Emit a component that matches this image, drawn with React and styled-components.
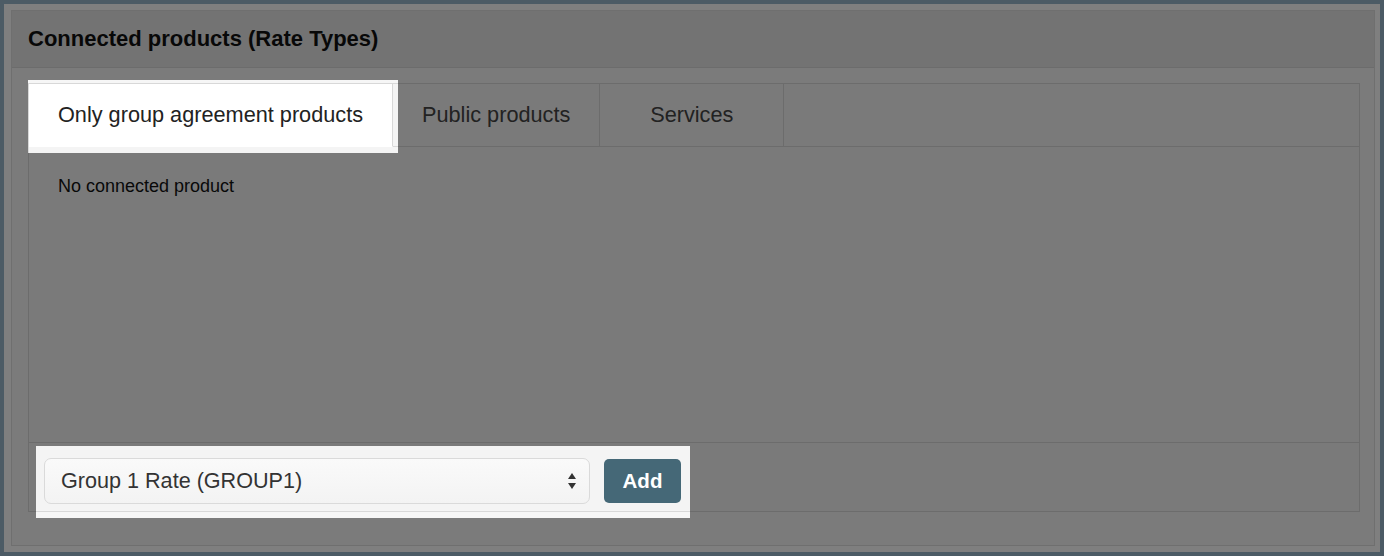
import styled, { createGlobalStyle } from 'styled-components'

const GlobalStyle = createGlobalStyle`
  html, body {
    margin: 0;
    padding: 0;
    background: #4c5b65;
  }
  * {
    box-sizing: border-box;
  }
`;

const Page = styled.div`
  width: 1384px;
  height: 556px;
  padding: 4px;
  background: #4c5b65;
  font-family: "Liberation Sans", Helvetica, Arial, sans-serif;
`;

const Frame = styled.div`
  position: relative;
  height: 100%;
  background: #ffffff;
  padding: 6px 5px 6px 7px;
`;

const Panel = styled.div`
  height: 100%;
  display: flex;
  flex-direction: column;
  border: 1px solid #dedede;
  background: #f6f6f6;
`;

const PanelHeader = styled.div`
  height: 57px;
  flex-shrink: 0;
  display: flex;
  align-items: center;
  padding: 0 16px;
  background: #e6e6e6;
  border-bottom: 1px solid #d8d8d8;
  font-size: 22px;
  font-weight: bold;
  color: #111;
`;

const PanelBody = styled.div`
  flex: 1;
  display: flex;
  flex-direction: column;
  padding: 15px 14px 33px 16px;
`;

const TabBox = styled.div`
  flex: 1;
  display: flex;
  flex-direction: column;
  border: 1px solid #d8d8d8;
  background: #f4f4f4;
`;

const TabList = styled.div`
  display: flex;
  height: 63px;
  border-bottom: 1px solid #d8d8d8;
`;

const Tab = styled.div`
  height: 63px;
  margin-bottom: -1px;
  min-width: 184px;
  padding: 0 29px;
  display: flex;
  align-items: center;
  justify-content: center;
  font-size: 21.7px;
  color: ${p => (p.$active ? '#222' : '#444')};
  background: ${p => (p.$active ? '#ffffff' : 'transparent')};
  border-right: 1px solid #d8d8d8;
  border-bottom: 1px solid ${p => (p.$active ? '#ffffff' : '#d8d8d8')};
`;

const TabContent = styled.div`
  flex: 1;
  padding: 29px 29px;
  font-size: 18px;
  color: #111;
`;

const Footer = styled.div`
  display: flex;
  align-items: center;
  gap: 14px;
  padding: 15px 15px 7px 15px;
  border-top: 1px solid #d8d8d8;
`;

const SelectBox = styled.div`
  width: 546px;
  height: 46px;
  display: flex;
  align-items: center;
  justify-content: space-between;
  padding: 0 12px 0 16px;
  border: 1px solid #dadada;
  border-radius: 7px;
  background: linear-gradient(#fafafa, #f3f3f3);
  font-size: 21.6px;
  color: #333;
`;

const AddButton = styled.button`
  width: 77px;
  height: 44px;
  border: none;
  border-radius: 5px;
  background: #456877;
  color: #fff;
  font-family: inherit;
  font-size: 20.5px;
  font-weight: bold;
  padding: 0;
`;

/* tour dimmer with two cut-out holes over the highlighted parts */
const Dimmer = styled.div`
  position: absolute;
  inset: 0;
  background: rgba(0, 0, 0, 0.5);
  pointer-events: none;
  clip-path: path(evenodd, 'M0 0 H1376 V548 H0 Z M24 76 H394 V149 H24 Z M32 442 H686 V514 H32 Z');
`;

function SortArrows() {
    return (
        <svg width="10" height="18" viewBox="0 0 10 18">
            <path d="M5 1 L9 7 H1 Z" fill="#333" />
            <path d="M5 17 L9 11 H1 Z" fill="#333" />
        </svg>
    )
}

function App() {
    return (
        <Page>
            <GlobalStyle />
            <Frame>
                <Panel>
                    <PanelHeader>Connected products (Rate Types)</PanelHeader>
                    <PanelBody>
                        <TabBox>
                            <TabList>
                                <Tab $active>Only group agreement products</Tab>
                                <Tab>Public products</Tab>
                                <Tab>Services</Tab>
                            </TabList>
                            <TabContent>No connected product</TabContent>
                            <Footer>
                                <SelectBox>
                                    <span>Group 1 Rate (GROUP1)</span>
                                    <SortArrows />
                                </SelectBox>
                                <AddButton>Add</AddButton>
                            </Footer>
                        </TabBox>
                    </PanelBody>
                </Panel>
                <Dimmer />
            </Frame>
        </Page>
    )
}

export default App
